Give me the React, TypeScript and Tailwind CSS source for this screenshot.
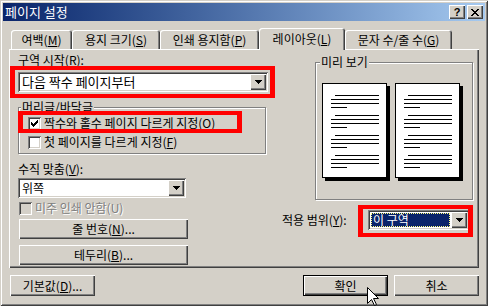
import React from "react";

const raised =
  "shadow-[inset_1px_1px_0_#ffffff,inset_-1px_-1px_0_#404040,inset_-2px_-2px_0_#808080]";
const sunken =
  "shadow-[inset_1px_1px_0_#808080,inset_-1px_-1px_0_#ffffff,inset_2px_2px_0_#404040,inset_-2px_-2px_0_#d4d0c8]";
const etched =
  "border border-[#808080] shadow-[inset_1px_1px_0_#ffffff,1px_1px_0_#ffffff]";

const U = ({ c }: { c: string }) => (
  <span className="underline underline-offset-[1px] decoration-1">{c}</span>
);

const DownArrow = () => (
  <svg width="7" height="4" viewBox="0 0 7 4">
    <path d="M0 0h7v1h-1v1h-1v1h-1v1h-1v-1h-1v-1h-1v-1h-1z" fill="#000" />
  </svg>
);

const Combo = ({
  className,
  textClass,
  selected,
  children,
}: {
  className?: string;
  textClass?: string;
  selected?: boolean;
  children: React.ReactNode;
}) => {
  return (
    <div className={`flex h-[20px] bg-white p-[2px] ${sunken} ${className ?? ""}`}>
      {selected ? (
        <div className="flex-1 flex items-center my-[1px] mx-[1px] bg-[#0a246a] text-white border border-dotted border-[#ffff80] pl-[1px] whitespace-nowrap">
          <span className="leading-[12px]">{children}</span>
        </div>
      ) : (
        <div
          className={`flex-1 pl-[2px] leading-[16px] whitespace-nowrap ${textClass ?? ""}`}
        >
          {children}
        </div>
      )}
      <div
        className={`w-[16px] h-[16px] shrink-0 bg-[#d4d0c8] flex items-center justify-center ${raised}`}
      >
        <DownArrow />
      </div>
    </div>
  );
};

const Check = ({ checked, disabled }: { checked?: boolean; disabled?: boolean }) => (
  <div
    className={`w-[13px] h-[13px] shrink-0 flex items-center justify-center ${
      disabled ? "bg-[#d4d0c8]" : "bg-white"
    } ${sunken}`}
  >
    {checked && (
      <svg width="7" height="7" viewBox="0 0 7 7">
        <path
          d="M6 0h1v1h-1z M5 1h2v1h-2z M0 2h1v1h-1z M4 2h3v1h-3z M0 3h2v1h-2z M3 3h3v1h-3z M0 4h5v1h-5z M1 5h3v1h-3z M2 6h1v1h-1z"
          fill="#000"
        />
      </svg>
    )}
  </div>
);

const Btn = ({
  className,
  children,
  isDefault,
}: {
  className?: string;
  children: React.ReactNode;
  isDefault?: boolean;
}) =>
  isDefault ? (
    <div className={`border border-black ${className ?? ""}`}>
      <div className={`h-full flex items-center justify-center bg-[#d4d0c8] ${raised}`}>
        {children}
      </div>
    </div>
  ) : (
    <div
      className={`flex items-center justify-center bg-[#d4d0c8] ${raised} ${className ?? ""}`}
    >
      {children}
    </div>
  );

const Tab = ({
  active,
  className,
  children,
}: {
  active?: boolean;
  className?: string;
  children: React.ReactNode;
}) => (
  <div
    className={`flex items-center justify-center rounded-t-[3px] bg-[#d4d0c8] shadow-[inset_1px_1px_0_#ffffff,inset_-1px_0_0_#404040,inset_-2px_0_0_#808080] ${
      active ? "h-[22px] -mb-[1px] relative z-10" : "h-[19px]"
    } ${className ?? ""}`}
  >
    {children}
  </div>
);

const PageIcon = ({ x }: { x: number }) => {
  const groups = [0, 20, 40, 60];
  return (
    <g transform={`translate(${x} 0)`}>
      <rect x="3" y="3" width="65" height="95" fill="#000" />
      <rect x="0.5" y="0.5" width="64" height="94" fill="#fff" stroke="#000" />
      {groups.map((g) => (
        <g key={g} fill="#000">
          <rect x="13" y={12 + g} width="44" height="1" />
          <rect x="9" y={16 + g} width="48" height="1" />
          <rect x="9" y={20 + g} width="48" height="1" />
          <rect x="9" y={24 + g} width="16" height="1" />
        </g>
      ))}
    </g>
  );
};

const RedBox = ({ className }: { className: string }) => (
  <span className={`absolute pointer-events-none border-[#ff0000] ${className}`} />
);

export default function App() {
  return (
    <div className="w-[488px] h-[306px] relative overflow-hidden bg-[#d4d0c8] text-[12px] text-black font-['Noto_Sans_CJK_KR','Liberation_Sans',sans-serif] shadow-[inset_1px_1px_0_#d4d0c8,inset_-1px_-1px_0_#404040,inset_2px_2px_0_#ffffff,inset_-2px_-2px_0_#808080] p-[3px]">
      {/* title bar */}
      <div className="h-[18px] flex items-center bg-linear-to-r from-[#0a246a] to-[#a6caf0] pl-[2px] pr-[2px]">
        <span className="flex-1 text-white text-[13px] leading-[18px]">페이지 설정</span>
        <div className="flex gap-[2px]">
          <div className={`w-[16px] h-[14px] bg-[#d4d0c8] flex items-center justify-center ${raised}`}>
            <span className="font-['Liberation_Sans',sans-serif] font-bold text-[11px] leading-[11px]">?</span>
          </div>
          <div className={`w-[16px] h-[14px] bg-[#d4d0c8] flex items-center justify-center ${raised}`}>
            <svg width="8" height="7" viewBox="0 0 8 7">
              <path
                d="M0 0h2v1h-2z M6 0h2v1h-2z M1 1h2v1h-2z M5 1h2v1h-2z M2 2h4v1h-4z M3 3h2v1h-2z M2 4h4v1h-4z M1 5h2v1h-2z M5 5h2v1h-2z M0 6h2v1h-2z M6 6h2v1h-2z"
                fill="#000"
              />
            </svg>
          </div>
        </div>
      </div>

      <div className="px-[6px]">
        {/* tabs */}
        <div className="flex items-end h-[21px] mt-[7px] pl-[2px]">
          <Tab className="w-[61px]">
            여백(<U c="M" />)
          </Tab>
          <Tab className="w-[88px]">
            용지 크기(<U c="S" />)
          </Tab>
          <Tab className="w-[99px]">
            인쇄 용지함(<U c="P" />)
          </Tab>
          <Tab active className="w-[86px]">
            레이아웃(<U c="L" />)
          </Tab>
          <Tab className="w-[107px]">
            문자 수/줄 수(<U c="G" />)
          </Tab>
        </div>

        {/* panel */}
        <div className={`h-[219px] flex pl-[9px] pt-[4px] ${raised}`}>
          {/* left column */}
          <div className="w-[250px] flex flex-col">
            <div className="h-[14px] leading-[14px]">
              구역 시작(<U c="R" />):
            </div>
            <div className="relative mt-[5px]">
              <Combo className="w-[250px]" textClass="text-[13px]">
                다음 짝수 페이지부터
              </Combo>
              <RedBox className="left-[-8px] right-[-7px] top-[-6px] bottom-[-6px] border-x-[5px] border-y-4" />
            </div>

            <fieldset className={`mt-[8px] w-[248px] pl-[9px] pb-[3px] ${etched}`}>
              <legend className="ml-[-7px] px-[1px] leading-[14px] bg-[#d4d0c8] relative">
                머리글/바닥글
              </legend>
              <div className="relative flex items-center gap-[3px] h-[16px] mt-[1px]">
                <Check checked />
                <span className="leading-[16px] whitespace-nowrap">
                  짝수와 홀수 페이지 다르게 지정(<U c="O" />)
                </span>
                <RedBox className="left-[-10px] top-[-4px] w-[224px] h-[22px] border-x-[5px] border-y-4" />
              </div>
              <div className="flex items-center gap-[3px] h-[16px] mt-[3px]">
                <Check />
                <span className="leading-[16px] whitespace-nowrap">
                  첫 페이지를 다르게 지정(<U c="F" />)
                </span>
              </div>
            </fieldset>

            <div className="h-[14px] leading-[14px] mt-[8px]">
              수직 맞춤(<U c="V" />):
            </div>
            <Combo className="w-[168px] mt-[2px]">위쪽</Combo>

            <div className="flex items-center gap-[3px] h-[14px] mt-[3px] ml-[1px]">
              <Check disabled />
              <span className="leading-[14px] text-[#808080] [text-shadow:1px_1px_0_#ffffff] whitespace-nowrap">
                미주 인쇄 안함(U)
              </span>
            </div>

            <Btn className="w-[169px] h-[20px] ml-[1px] mt-[4px]">
              줄 번호(<U c="N" />)...
            </Btn>
            <Btn className="w-[169px] h-[20px] ml-[1px] mt-[6px]">
              테두리(<U c="B" />)...
            </Btn>
          </div>

          {/* right column */}
          <div className="ml-[14px] w-[191px] flex flex-col">
            <fieldset className={`ml-[33px] mt-[2px] w-[158px] h-[145px] pl-[6px] ${etched}`}>
              <legend className="ml-[-2px] px-[1px] leading-[14px] bg-[#d4d0c8] relative">
                미리 보기
              </legend>
              <svg width="142" height="99" viewBox="0 0 142 99" className="mt-[14px]">
                <PageIcon x={0} />
                <PageIcon x={73} />
              </svg>
            </fieldset>

            <div className="flex items-center h-[20px] mt-[10px]">
              <span className="w-[86px] leading-[14px] whitespace-nowrap">
                적용 범위(<U c="Y" />):
              </span>
              <div className="relative">
                <Combo selected className="w-[101px]">
                  이 구역
                </Combo>
                <RedBox className="left-[-10px] right-[-4px] top-[-5px] bottom-[-7px] border-x-[5px] border-y-4" />
              </div>
            </div>
          </div>
        </div>

        {/* bottom buttons */}
        <div className="flex mt-[7px] gap-[6px]">
          <Btn className="w-[85px] h-[21px] ml-[1px]">
            기본값(<U c="D" />)...
          </Btn>
          <Btn isDefault className="w-[85px] h-[21px] ml-auto">
            확인
          </Btn>
          <Btn className="w-[85px] h-[21px]">취소</Btn>
        </div>
      </div>

      {/* mouse pointer */}
      <svg
        width="12"
        height="19"
        viewBox="0 0 12 19"
        className="absolute left-[367px] top-[287px]"
      >
        <path
          d="M0.5 0.5 L0.5 16.5 L4.5 12.5 L7.5 18.5 L9.5 17.5 L6.5 11.5 L11.5 11.5 Z"
          fill="#fff"
          stroke="#000"
          strokeWidth="1"
        />
      </svg>
    </div>
  );
}
